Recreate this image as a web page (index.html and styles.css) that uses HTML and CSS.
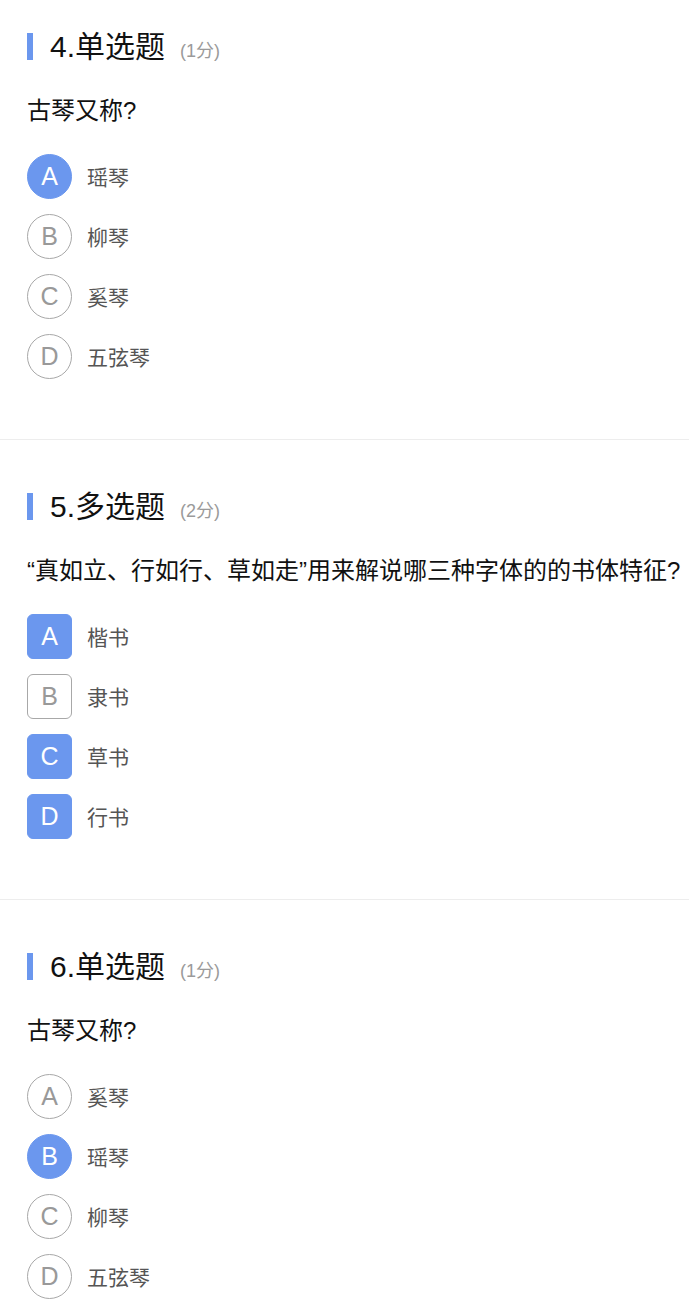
FILE: index.html
```html
<!DOCTYPE html>
<html lang="zh-CN">
<head>
<meta charset="utf-8">
<title>题目</title>
<link rel="stylesheet" href="styles.css">
</head>
<body>
<div class="page">
  <section class="question">
    <div class="head">
      <span class="bar"></span>
      <span class="title">4.单选题</span>
      <span class="score">(1分)</span>
    </div>
    <div class="stem">古琴又称?</div>
    <ul class="options">
      <li class="option"><span class="mark round selected">A</span><span class="label">瑶琴</span></li>
      <li class="option"><span class="mark round">B</span><span class="label">柳琴</span></li>
      <li class="option"><span class="mark round">C</span><span class="label">奚琴</span></li>
      <li class="option"><span class="mark round">D</span><span class="label">五弦琴</span></li>
    </ul>
  </section>
  <section class="question">
    <div class="head">
      <span class="bar"></span>
      <span class="title">5.多选题</span>
      <span class="score">(2分)</span>
    </div>
    <div class="stem">“真如立、行如行、草如走”用来解说哪三种字体的的书体特征?</div>
    <ul class="options">
      <li class="option"><span class="mark square selected">A</span><span class="label">楷书</span></li>
      <li class="option"><span class="mark square">B</span><span class="label">隶书</span></li>
      <li class="option"><span class="mark square selected">C</span><span class="label">草书</span></li>
      <li class="option"><span class="mark square selected">D</span><span class="label">行书</span></li>
    </ul>
  </section>
  <section class="question">
    <div class="head">
      <span class="bar"></span>
      <span class="title">6.单选题</span>
      <span class="score">(1分)</span>
    </div>
    <div class="stem">古琴又称?</div>
    <ul class="options">
      <li class="option"><span class="mark round">A</span><span class="label">奚琴</span></li>
      <li class="option"><span class="mark round selected">B</span><span class="label">瑶琴</span></li>
      <li class="option"><span class="mark round">C</span><span class="label">柳琴</span></li>
      <li class="option"><span class="mark round">D</span><span class="label">五弦琴</span></li>
    </ul>
  </section>
</div>
</body>
</html>
```

FILE: styles.css
```css
html, body {
  margin: 0;
  padding: 0;
  background: #ffffff;
}

body {
  font-family: "Liberation Sans", "Noto Sans CJK SC", sans-serif;
  color: #111111;
}

.page {
  display: flex;
  flex-direction: column;
}

.question {
  padding: 53px 27px 60px;
  border-bottom: 1px solid #ededed;
}

.question:first-child {
  padding-top: 33px;
}

.question:last-child {
  border-bottom: none;
}

.head {
  display: flex;
  align-items: center;
  height: 27px;
}

.bar {
  width: 6px;
  height: 27px;
  background: #6b97ee;
  flex: none;
}

.title {
  margin-left: 17px;
  font-size: 30px;
  line-height: 27px;
  color: #111111;
}

.score {
  margin-left: 15px;
  margin-top: 8px;
  font-size: 18px;
  line-height: 20px;
  color: #9a9a9a;
}

.stem {
  margin-top: 36px;
  font-size: 24px;
  line-height: 30px;
  height: 30px;
  color: #111111;
  white-space: nowrap;
}

.options {
  list-style: none;
  margin: 28px 0 0;
  padding: 0;
  display: flex;
  flex-direction: column;
  gap: 15px;
}

.option {
  display: flex;
  align-items: center;
  height: 45px;
}

.mark {
  box-sizing: border-box;
  width: 45px;
  height: 45px;
  flex: none;
  display: flex;
  align-items: center;
  justify-content: center;
  border: 1px solid #a8a8a8;
  color: #999999;
  font-size: 25px;
  line-height: 1;
  background: #ffffff;
}

.mark.round {
  border-radius: 50%;
}

.mark.square {
  border-radius: 6px;
}

.mark.selected {
  background: #6b97ee;
  border-color: #6b97ee;
  color: #ffffff;
}

.label {
  margin-left: 15px;
  margin-top: 3px;
  font-size: 21px;
  line-height: 24px;
  color: #555555;
}
```
